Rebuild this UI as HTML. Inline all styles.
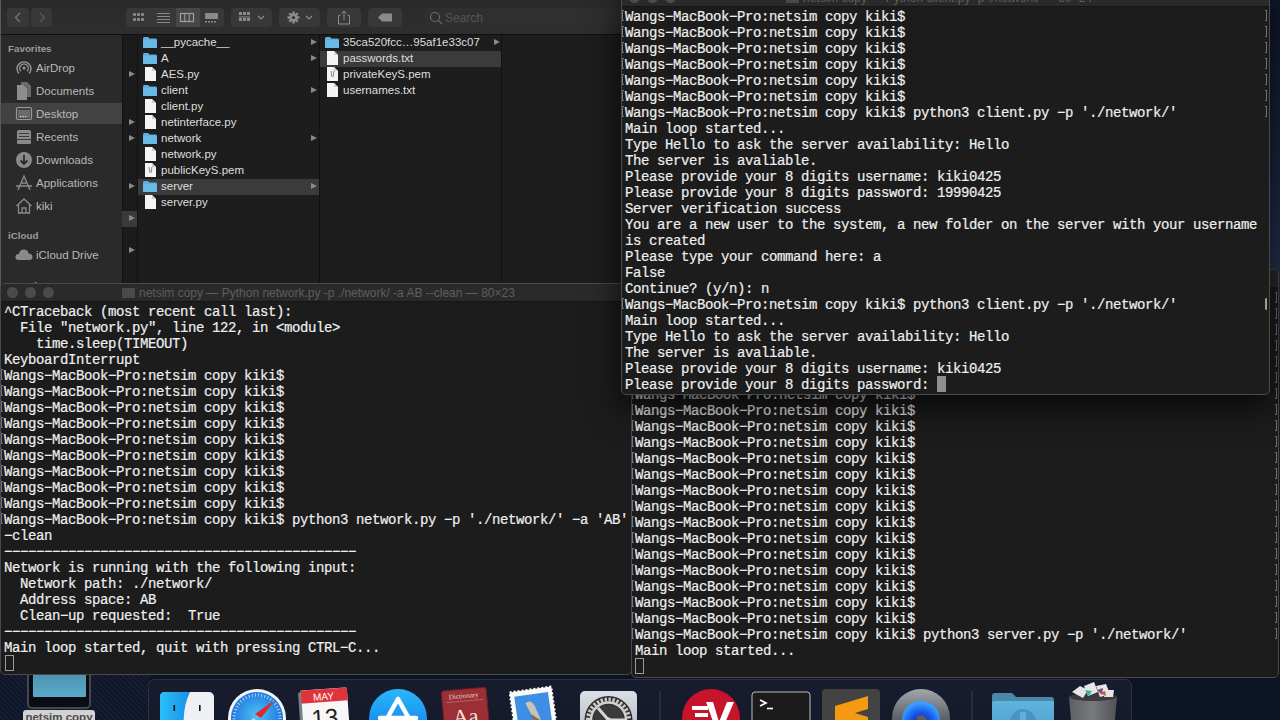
<!DOCTYPE html>
<html><head><meta charset="utf-8"><style>
html,body{margin:0;padding:0;width:1280px;height:720px;overflow:hidden;background:#0e1526;font-family:"Liberation Sans",sans-serif;}
#desk{position:absolute;left:0;top:0;width:1280px;height:720px;background:linear-gradient(180deg,#0f172b 0px,#1c2943 200px,#24324f 270px,#121a2c 400px,#0c1322 600px);}
.win{position:absolute;box-sizing:border-box;}
.layer{position:absolute;left:0;top:0;width:1280px;height:720px;pointer-events:none;}
.t{position:absolute;white-space:pre;font-family:"Liberation Mono",monospace;font-size:14px;letter-spacing:-0.4013px;line-height:16px;color:#efefef;-webkit-text-stroke:0.2px #efefef;}
.mk{position:absolute;width:1px;height:9px;border:1px solid #777;border-right:none;}
.cur{position:absolute;width:7px;height:14px;border:1px solid #9a9a9a;}
.curf{position:absolute;width:9px;height:16px;background:#8e8e8e;}
#tbl{left:0;top:283px;width:632px;height:392px;background:#1c1c1c;border:1px solid #4a4a4a;border-radius:5px;z-index:2;overflow:hidden;}
#tbr{left:631px;top:269px;width:648px;height:409px;background:#1c1c1c;border:1px solid #4a4a4a;border-radius:5px;z-index:4;}
#ttr{left:621px;top:-12px;width:649px;height:407px;background:#1c1c1c;border:1px solid #4a4a4a;border-radius:5px;z-index:6;box-shadow:0 12px 34px rgba(0,0,0,.75);}
.tbar{position:absolute;left:0;top:0;width:100%;height:17px;background:#2a2a2a;border-bottom:1px solid #151515;overflow:hidden;}
.light{position:absolute;top:3px;width:11px;height:11px;border-radius:50%;background:#4b4b4b;}
.ttl{position:absolute;top:1px;font-size:12px;color:#5e5e5e;white-space:nowrap;line-height:16px;}
.fold{display:inline-block;width:13px;height:10px;background:#4a4a4a;border-radius:1px;margin-right:4px;vertical-align:-1px;}
.fb{position:absolute;top:8px;height:19px;background:#383838;border-radius:4px;}
.sh{position:absolute;left:8px;font-size:9.8px;line-height:14px;color:#9a9a9a;font-weight:bold;}
.si{position:absolute;left:36px;font-size:11.5px;line-height:16px;color:#b9b9b9;}
.fi{position:absolute;font-size:11.5px;line-height:16px;color:#dedede;white-space:nowrap;}
.ar{position:absolute;width:0;height:0;border-left:6px solid #8a8a8a;border-top:3.5px solid transparent;border-bottom:3.5px solid transparent;}
.mkr{position:absolute;width:1px;height:9px;border:1px solid #707070;border-left:none;}

</style></head><body>
<div id="desk"></div>
<div style="position:absolute;left:0;top:660px;width:150px;height:60px;background:repeating-linear-gradient(45deg,#0f1629 0px,#0f1629 2px,#161e33 2px,#161e33 3.6px);"></div>
<svg style="position:absolute;left:0;top:660px" width="1280" height="60">
 <defs>
  <linearGradient id="dkbg" x1="0" y1="0" x2="0" y2="1"><stop offset="0" stop-color="#171d2e"/><stop offset="1" stop-color="#141a2a"/></linearGradient>
  <linearGradient id="fdl" x1="0" y1="0" x2="1" y2="0"><stop offset="0" stop-color="#28c0f7"/><stop offset="1" stop-color="#1b8fe9"/></linearGradient>
  <radialGradient id="saf" cx="0.5" cy="0.45" r="0.6"><stop offset="0" stop-color="#4fc3f7"/><stop offset="1" stop-color="#1565d8"/></radialGradient>
  <linearGradient id="aps" x1="0" y1="0" x2="0" y2="1"><stop offset="0" stop-color="#28b8fa"/><stop offset="1" stop-color="#1470e6"/></linearGradient>
  <linearGradient id="spf" x1="0" y1="0" x2="0" y2="1"><stop offset="0" stop-color="#d9e1e6"/><stop offset="1" stop-color="#aeb7bd"/></linearGradient>
  <linearGradient id="dlf" x1="0" y1="0" x2="0" y2="1"><stop offset="0" stop-color="#5fb3dc"/><stop offset="1" stop-color="#4d9ec9"/></linearGradient><linearGradient id="trg" x1="0" y1="0" x2="1" y2="0"><stop offset="0" stop-color="#5e6064"/><stop offset="0.5" stop-color="#77797d"/><stop offset="1" stop-color="#505256"/></linearGradient>
  <linearGradient id="qtg" x1="0" y1="0" x2="0" y2="1"><stop offset="0" stop-color="#a3a7ae"/><stop offset="0.5" stop-color="#5d6168"/><stop offset="1" stop-color="#3a3d42"/></linearGradient><radialGradient id="qtb" cx="0.5" cy="0.6" r="0.55"><stop offset="0" stop-color="#0a1f80"/><stop offset="0.6" stop-color="#1a5cf0"/><stop offset="1" stop-color="#3aa0ff"/></radialGradient>
 </defs>
 <!-- dock background -->
 <rect x="148.5" y="19.5" width="983" height="50" rx="6" fill="url(#dkbg)" stroke="#2b3245" stroke-width="1"/>
 <!-- finder -->
 <rect x="160" y="32" width="54" height="40" rx="5" fill="#eef0f3"/>
 <path d="M165 32 L190 32 Q182 48 184 72 L165 72 Q160 72 160 67 L160 37 Q160 32 165 32 Z" fill="url(#fdl)"/>
 <rect x="173.5" y="45" width="1.6" height="6" fill="#111"/><rect x="199" y="45" width="1.6" height="6" fill="#111"/>
 <!-- safari -->
 <circle cx="257" cy="58" r="29" fill="#f2f4f6"/>
 <circle cx="257" cy="58" r="26" fill="url(#saf)"/>
 <circle cx="257" cy="58" r="23" fill="none" stroke="#cfe6fb" stroke-width="3" stroke-dasharray="1 2.2" opacity="0.8"/>
 <path d="M275 40 L259 56 L255 60 Z" fill="#ff3b30"/><path d="M275 40 L261 58 L255 54 Z" fill="#e0262a"/>
 <path d="M239 76 L255 60 L259 56 Z" fill="#f0f0f0"/><path d="M239 76 L253 58 L259 62 Z" fill="#d8d8d8"/>
 <!-- calendar -->
 <g transform="rotate(-4 325 60)">
  <rect x="302" y="29" width="47" height="50" rx="2" fill="#f7f7f7"/>
  <rect x="302" y="29" width="47" height="13" fill="#e0343c"/>
  <rect x="300" y="31" width="3" height="48" fill="#7a7f86"/>
  <text x="325" y="40" font-family="Liberation Sans" font-size="10" fill="#fff" text-anchor="middle">MAY</text>
  <text x="325" y="66" font-family="Liberation Sans" font-size="24" fill="#222" text-anchor="middle">13</text>
 </g>
 <!-- app store -->
 <circle cx="398" cy="58" r="29" fill="url(#aps)"/>
 <path d="M398 39 L384 64 M398 39 L412 64 M380 58 L416 58" stroke="#fff" stroke-width="4.5" stroke-linecap="round" fill="none"/>
 <!-- dictionary -->
 <g transform="rotate(-5 466 62)">
  <rect x="444" y="29" width="45" height="50" rx="3" fill="#9a2f36"/>
  <rect x="444" y="29" width="45" height="50" rx="3" fill="none" stroke="#6e1d24" stroke-width="1"/>
  <text x="466" y="38" font-family="Liberation Serif" font-size="7" fill="#f1d6c8" text-anchor="middle">Dictionary</text>
  <line x1="448" y1="41" x2="485" y2="41" stroke="#c98080" stroke-width="0.6"/>
  <text x="466" y="64" font-family="Liberation Serif" font-size="22" fill="#f4e4dc" text-anchor="middle">Aa</text>
 </g>
 <!-- mail stamp -->
 <g transform="rotate(-8 536 62)">
  <rect x="514" y="29" width="42" height="48" fill="#fafafa" stroke="#fff" stroke-width="2" stroke-dasharray="2 2"/>
  <rect x="518" y="34" width="34" height="40" fill="#3f8ee6"/>
  <path d="M528 42 Q534 38 537 46 L541 60 Q538 64 534 58 Z" fill="#c9c3b5"/>
  <path d="M532 55 L544 66" stroke="#8a6a4a" stroke-width="3"/>
 </g>
 <!-- system prefs -->
 <rect x="580" y="31" width="57" height="45" rx="5" fill="url(#spf)"/>
 <circle cx="608.5" cy="60" r="24" fill="#2e2e2e"/>
 <circle cx="608.5" cy="60" r="20.5" fill="none" stroke="#c9c9c9" stroke-width="4" stroke-dasharray="2.4 1.6"/>
 <circle cx="608.5" cy="60" r="17.5" fill="none" stroke="#d0d0d0" stroke-width="2.5"/>
 <circle cx="608.5" cy="60" r="15.5" fill="#3a3a3a"/>
 <path d="M598 48 L608.5 60 L626 60 M608.5 60 L600 74" stroke="#d6d6d6" stroke-width="3" fill="none"/>
 <circle cx="608.5" cy="60" r="2.5" fill="#d6d6d6"/>
 <!-- separator -->
 <line x1="660" y1="31" x2="660" y2="60" stroke="#3a4152" stroke-width="1"/>
 <!-- expressvpn -->
 <circle cx="711" cy="58" r="29" fill="#c8142a"/>
 <g fill="#fff"><rect x="692" y="46" width="16" height="4"/><rect x="695" y="53" width="13" height="4"/><rect x="690" y="60" width="18" height="4"/></g>
 <path d="M706 42 L716 70 L722 70 L734 42 L727 42 L719 62 L713 42 Z" fill="#fff"/>
 <!-- terminal -->
 <rect x="752" y="32" width="58" height="42" rx="3" fill="#1b1b1b" stroke="#bdbdbd" stroke-width="1"/>
 <path d="M760 40 L766 43 L760 46" stroke="#fff" stroke-width="1.6" fill="none"/>
 <line x1="767" y1="48.5" x2="773" y2="48.5" stroke="#fff" stroke-width="1.6"/>
 <!-- sublime -->
 <rect x="822" y="29" width="58" height="50" rx="4" fill="#434343"/>
 <path d="M835 46 L868 36 L868 49 L855 53 L868 57 L868 70 L835 60 Z" fill="#f59a10"/>
 <!-- quicktime -->
 <circle cx="921" cy="58" r="29" fill="url(#qtg)"/>
 <circle cx="921" cy="60" r="19" fill="url(#qtb)"/>
 <path d="M916 58 Q921 52 926 58 L934 72 L926 76 Z" fill="#5a5d63"/>
 <!-- separator -->
 <line x1="972" y1="31" x2="972" y2="60" stroke="#3a4152" stroke-width="1"/>
 <!-- downloads folder -->
 <path d="M992 36 Q992 33 995 33 L1012 33 L1016 37 L1051 37 Q1054 37 1054 40 L1054 76 L992 76 Z" fill="#4a88a8"/>
 <rect x="992" y="41" width="62" height="36" rx="2" fill="url(#dlf)"/>
 <circle cx="1023" cy="62" r="13" fill="#4a94bf"/>
 <rect x="1020" y="52" width="6" height="14" fill="#5fb0da"/>
 <!-- trash -->
 <path d="M1069 37 L1117 37 L1113 82 L1073 82 Z" fill="url(#trg)"/>
 <ellipse cx="1093" cy="37" rx="24" ry="4" fill="#3a3c40"/>
 <g fill="#e6e6e6"><path d="M1072 32 L1080 26 L1088 30 L1083 38 Z"/><path d="M1084 26 L1094 22 L1098 32 L1088 36 Z"/><path d="M1096 26 L1106 24 L1110 34 L1100 37 Z"/><path d="M1106 30 L1114 30 L1113 37 L1104 37 Z"/></g>
 <path d="M1085 30 L1092 31 L1089 36 Z" fill="#33b3a0"/><path d="M1097 30 L1103 28 L1102 35 Z" fill="#7a4a80"/><path d="M1100 33 L1105 31 L1106 36 Z" fill="#c06030"/>
 </svg>
<!-- desktop icon -->
<div style="position:absolute;left:27px;top:665px;width:64px;height:44px;border:2px solid #43474f;border-radius:5px;background:#0a0d14;box-sizing:border-box;"></div>
<div style="position:absolute;left:33px;top:665px;width:53px;height:32px;background:linear-gradient(#4a8aa3,#5aaacb);border-radius:1px;"></div>
<div style="position:absolute;left:23px;top:710px;width:72px;height:14px;background:#d2d2d2;border-radius:3px;font-size:11.5px;line-height:15px;color:#4a4a4a;text-align:center;font-weight:bold;">netsim copy</div>

<div class="win" id="finder" style="left:0;top:0;width:622px;height:290px;background:#1d1d1d;z-index:1;overflow:hidden;">
 <!-- toolbar -->
 <div style="position:absolute;left:0;top:0;width:622px;height:34px;background:linear-gradient(#2a2a2a,#2e2e2e);border-bottom:1px solid #101010;"></div>
 <div style="position:absolute;left:0;top:0;width:1px;height:290px;background:#5a5a5a;"></div>
 <!-- nav buttons -->
 <div class="fb" style="left:7px;width:22px;"><svg width="22" height="19"><path d="M13 5 L8.5 9.5 L13 14" stroke="#7a7a7a" stroke-width="1.2" fill="none"/></svg></div>
 <div class="fb" style="left:31px;width:21px;"><svg width="21" height="19"><path d="M9 5 L13.5 9.5 L9 14" stroke="#5a5a5a" stroke-width="1.2" fill="none"/></svg></div>
 <!-- view segmented -->
 <div class="fb" style="left:126px;width:98px;"></div>
 <div style="position:absolute;left:176px;top:8px;width:24px;height:19px;background:#474747;"></div>
 <svg style="position:absolute;left:126px;top:8px" width="98" height="19">
  <g fill="#8a8a8a">
   <rect x="7" y="5" width="3" height="3" rx="1"/><rect x="11" y="5" width="3" height="3" rx="1"/><rect x="15" y="5" width="3" height="3" rx="1"/>
   <rect x="7" y="10" width="3" height="3" rx="1"/><rect x="11" y="10" width="3" height="3" rx="1"/><rect x="15" y="10" width="3" height="3" rx="1"/>
  </g>
  <g stroke="#8a8a8a" stroke-width="1">
   <line x1="31" y1="5.5" x2="44" y2="5.5"/><line x1="31" y1="8.5" x2="44" y2="8.5"/><line x1="31" y1="11.5" x2="44" y2="11.5"/><line x1="31" y1="14.5" x2="44" y2="14.5"/>
  </g>
  <rect x="54.5" y="5.5" width="13" height="8" fill="none" stroke="#a0a0a0" stroke-width="1.2"/>
  <line x1="58.8" y1="5.5" x2="58.8" y2="13.5" stroke="#a0a0a0"/><line x1="63.2" y1="5.5" x2="63.2" y2="13.5" stroke="#a0a0a0"/>
  <rect x="79" y="5" width="13" height="6" fill="#8a8a8a" rx="1"/>
  <g fill="#8a8a8a"><rect x="79" y="13" width="2" height="1.5"/><rect x="82" y="13" width="2" height="1.5"/><rect x="85" y="13" width="2" height="1.5"/><rect x="88" y="13" width="2" height="1.5"/></g>
 </svg>
 <!-- arrange -->
 <div class="fb" style="left:231px;width:41px;"></div>
 <svg style="position:absolute;left:231px;top:8px" width="41" height="19">
  <g fill="#8a8a8a"><rect x="8" y="4" width="3" height="3"/><rect x="12" y="4" width="3" height="3"/><rect x="16" y="4" width="3" height="3"/>
  <rect x="8" y="8.5" width="11" height="1"/>
  <rect x="8" y="10" width="3" height="3"/><rect x="12" y="10" width="3" height="3"/><rect x="16" y="10" width="3" height="3"/></g>
  <path d="M27 8 L30 11 L33 8" stroke="#8a8a8a" stroke-width="1.2" fill="none"/>
 </svg>
 <!-- gear -->
 <div class="fb" style="left:279px;width:41px;"></div>
 <svg style="position:absolute;left:279px;top:8px" width="41" height="19">
  <g transform="translate(14.5,9.5)"><circle r="4.3" fill="#8a8a8a"/>
   <g fill="#8a8a8a"><rect x="-1.2" y="-6" width="2.4" height="12"/><rect x="-1.2" y="-6" width="2.4" height="12" transform="rotate(45)"/><rect x="-1.2" y="-6" width="2.4" height="12" transform="rotate(90)"/><rect x="-1.2" y="-6" width="2.4" height="12" transform="rotate(135)"/></g>
   <circle r="1.6" fill="#333"/></g>
  <path d="M27 8 L30 11 L33 8" stroke="#8a8a8a" stroke-width="1.2" fill="none"/>
 </svg>
 <!-- share -->
 <div class="fb" style="left:327px;width:34px;"></div>
 <svg style="position:absolute;left:327px;top:8px" width="34" height="19">
  <path d="M13.5 7.5 L11.5 7.5 L11.5 16 L22.5 16 L22.5 7.5 L20.5 7.5" stroke="#8a8a8a" stroke-width="1" fill="none"/>
  <path d="M17 12 L17 3 M14.5 5.5 L17 3 L19.5 5.5" stroke="#8a8a8a" stroke-width="1" fill="none"/>
 </svg>
 <!-- tag -->
 <div class="fb" style="left:368px;width:34px;"></div>
 <svg style="position:absolute;left:368px;top:8px" width="34" height="19">
  <path d="M10 9.5 L14 5.5 L24 5.5 L24 13.5 L14 13.5 Z" fill="#8a8a8a"/>
 </svg>
 <!-- search -->
 <div class="fb" style="left:425px;width:220px;background:#2f2f2f;"></div>
 <svg style="position:absolute;left:428px;top:10px" width="16" height="16"><circle cx="7" cy="7" r="4.5" stroke="#6a6a6a" stroke-width="1.2" fill="none"/><line x1="10.3" y1="10.3" x2="14" y2="14" stroke="#6a6a6a" stroke-width="1.2"/></svg>
 <div style="position:absolute;left:445px;top:10px;font-size:12px;line-height:16px;color:#555;">Search</div>

 <!-- sidebar -->
 <div style="position:absolute;left:1px;top:35px;width:121px;height:255px;background:#2a2a2a;"></div>
 <div style="position:absolute;left:1px;top:103px;width:121px;height:21px;background:#424242;"></div>
 <div class="sh" style="top:42px">Favorites</div>
 <div class="si" style="top:60px">AirDrop</div>
 <div class="si" style="top:83px">Documents</div>
 <div class="si" style="top:106px">Desktop</div>
 <div class="si" style="top:129px">Recents</div>
 <div class="si" style="top:152px">Downloads</div>
 <div class="si" style="top:175px">Applications</div>
 <div class="si" style="top:198px">kiki</div>
 <div class="sh" style="top:229px">iCloud</div>
 <div class="si" style="top:247px">iCloud Drive</div>
 <div class="sh" style="top:279px">Locations</div>
 <svg style="position:absolute;left:14px;top:58px" width="20" height="210">
  <g stroke="#9a9a9a" fill="none" stroke-width="1.3">
   <!-- airdrop -->
   <path d="M4.8 15.5 A7 7 0 1 1 15.2 15.5"/><path d="M6.8 13.3 A4.3 4.3 0 1 1 13.2 13.3"/><circle cx="10" cy="10" r="1.5" fill="#9a9a9a" stroke="none"/>
  </g>
  <!-- documents -->
  <path d="M3 27 L10 27 L13 30 L13 42 L3 42 Z" fill="#8d8d8d"/><path d="M7 24 L13 24 L17 28 L17 39 L13 39 L13 30 L10 27 L7 27 Z" fill="#6a6a6a"/>
  <!-- desktop -->
  <rect x="2.5" y="49.5" width="15" height="12" rx="1.5" stroke="#9a9a9a" stroke-width="1.2" fill="none"/><rect x="4" y="52" width="12" height="8" fill="#6a6a6a"/>
  <g fill="#ddd"><rect x="6" y="58" width="1.2" height="1.2"/><rect x="8.5" y="58" width="1.2" height="1.2"/><rect x="11" y="58" width="1.2" height="1.2"/></g>
  <!-- recents -->
  <rect x="3" y="72" width="14" height="14" rx="1.5" fill="#8a8a8a"/><g stroke="#3a3a3a" stroke-width="1"><line x1="5" y1="75.5" x2="15" y2="75.5"/><line x1="5" y1="78.5" x2="15" y2="78.5"/><line x1="3" y1="81.5" x2="17" y2="81.5"/></g>
  <!-- downloads -->
  <circle cx="10" cy="102" r="8" fill="#8a8a8a"/><path d="M10 97 L10 106 M6.5 102.5 L10 106 L13.5 102.5" stroke="#2a2a2a" stroke-width="1.8" fill="none"/>
  <!-- applications -->
  <path d="M4 132 L10 118 L16 132 M2 128 L18 128 M7 125 L13 125" stroke="#8a8a8a" stroke-width="1.4" fill="none"/>
  <!-- home -->
  <path d="M2.5 148 L10 141 L17.5 148 M4.5 146.5 L4.5 155 L15.5 155 L15.5 146.5 M8 155 L8 150 L12 150 L12 155" stroke="#8a8a8a" stroke-width="1.3" fill="none"/>
  <!-- cloud -->
  <path d="M4.5 202 Q1 202 1.5 198.5 Q2 195.5 5 196 Q5.5 191.5 10 191.5 Q14 191.5 14.5 195.5 Q18.5 195.5 18.5 199 Q18.5 202 15.5 202 Z" fill="#8a8a8a"/>
 </svg>

 <!-- narrow column -->
 <div style="position:absolute;left:122px;top:35px;width:16px;height:255px;background:#1b1b1b;border-left:1px solid #121212;border-right:1px solid #121212;box-sizing:border-box;"></div>
 <div style="position:absolute;left:122px;top:211px;width:15px;height:16px;background:#3a3a3a;"></div>
 <div class="ar" style="left:129px;top:71px"></div>
 <div class="ar" style="left:129px;top:119px"></div>
 <div class="ar" style="left:129px;top:135px"></div>
 <div class="ar" style="left:129px;top:183px"></div>
 <div class="ar" style="left:129px;top:215px"></div>
 <div class="ar" style="left:129px;top:247px"></div>

 <!-- column 2 -->
 <div style="position:absolute;left:319px;top:35px;width:1px;height:255px;background:#111;"></div>
 <div style="position:absolute;left:138px;top:179px;width:181px;height:16px;background:#3b3b3b;"></div>
 <div class="fi" style="left:161px;top:34px">__pycache__</div>
 <div class="fi" style="left:161px;top:50px">A</div>
 <div class="fi" style="left:161px;top:66px">AES.py</div>
 <div class="fi" style="left:161px;top:82px">client</div>
 <div class="fi" style="left:161px;top:98px">client.py</div>
 <div class="fi" style="left:161px;top:114px">netinterface.py</div>
 <div class="fi" style="left:161px;top:130px">network</div>
 <div class="fi" style="left:161px;top:146px">network.py</div>
 <div class="fi" style="left:161px;top:162px">publicKeyS.pem</div>
 <div class="fi" style="left:161px;top:178px">server</div>
 <div class="fi" style="left:161px;top:194px">server.py</div>
 <div class="ar" style="left:311px;top:39px"></div>
 <div class="ar" style="left:311px;top:55px"></div>
 <div class="ar" style="left:311px;top:87px"></div>
 <div class="ar" style="left:311px;top:135px"></div>
 <div class="ar" style="left:311px;top:183px"></div>

 <!-- column 3 -->
 <div style="position:absolute;left:501px;top:35px;width:1px;height:255px;background:#111;"></div>
 <div style="position:absolute;left:320px;top:51px;width:181px;height:16px;background:#3b3b3b;"></div>
 <div class="fi" style="left:343px;top:34px">35ca520fcc…95af1e33c07</div>
 <div class="fi" style="left:343px;top:50px">passwords.txt</div>
 <div class="fi" style="left:343px;top:66px">privateKeyS.pem</div>
 <div class="fi" style="left:343px;top:82px">usernames.txt</div>
 <div class="ar" style="left:494px;top:39px"></div>

 <svg style="position:absolute;left:0;top:0" width="622" height="290">
  
  <g transform="translate(143,37)"><path d="M0 1.5 Q0 0 1.5 0 L5 0 L6.5 1.5 L12.5 1.5 Q14 1.5 14 3 L14 10 Q14 11 13 11 L1 11 Q0 11 0 10 Z" fill="#5fb0de"/><rect x="0" y="3" width="14" height="8" rx="1" fill="#67b9e6"/></g>
  <g transform="translate(143,53)"><path d="M0 1.5 Q0 0 1.5 0 L5 0 L6.5 1.5 L12.5 1.5 Q14 1.5 14 3 L14 10 Q14 11 13 11 L1 11 Q0 11 0 10 Z" fill="#5fb0de"/><rect x="0" y="3" width="14" height="8" rx="1" fill="#67b9e6"/></g>
  <g transform="translate(145,67)"><path d="M0 0 L7 0 L11 4 L11 14 L0 14 Z" fill="#f4f4f4"/><path d="M7 0 L7 4 L11 4" fill="#cfcfcf"/></g>
  <g transform="translate(143,85)"><path d="M0 1.5 Q0 0 1.5 0 L5 0 L6.5 1.5 L12.5 1.5 Q14 1.5 14 3 L14 10 Q14 11 13 11 L1 11 Q0 11 0 10 Z" fill="#5fb0de"/><rect x="0" y="3" width="14" height="8" rx="1" fill="#67b9e6"/></g>
  <g transform="translate(145,99)"><path d="M0 0 L7 0 L11 4 L11 14 L0 14 Z" fill="#f4f4f4"/><path d="M7 0 L7 4 L11 4" fill="#cfcfcf"/></g>
  <g transform="translate(145,115)"><path d="M0 0 L7 0 L11 4 L11 14 L0 14 Z" fill="#f4f4f4"/><path d="M7 0 L7 4 L11 4" fill="#cfcfcf"/></g>
  <g transform="translate(143,133)"><path d="M0 1.5 Q0 0 1.5 0 L5 0 L6.5 1.5 L12.5 1.5 Q14 1.5 14 3 L14 10 Q14 11 13 11 L1 11 Q0 11 0 10 Z" fill="#5fb0de"/><rect x="0" y="3" width="14" height="8" rx="1" fill="#67b9e6"/></g>
  <g transform="translate(145,147)"><path d="M0 0 L7 0 L11 4 L11 14 L0 14 Z" fill="#f4f4f4"/><path d="M7 0 L7 4 L11 4" fill="#cfcfcf"/></g>
  <g transform="translate(145,163)"><path d="M0 0 L7 0 L11 4 L11 14 L0 14 Z" fill="#f4f4f4"/><path d="M7 0 L7 4 L11 4" fill="#cfcfcf"/></g>
  <path d="M149 167 L150 173 M152 167 L151 173" stroke="#888" stroke-width="1"/>
  <g transform="translate(143,181)"><path d="M0 1.5 Q0 0 1.5 0 L5 0 L6.5 1.5 L12.5 1.5 Q14 1.5 14 3 L14 10 Q14 11 13 11 L1 11 Q0 11 0 10 Z" fill="#5fb0de"/><rect x="0" y="3" width="14" height="8" rx="1" fill="#67b9e6"/></g>
  <g transform="translate(145,195)"><path d="M0 0 L7 0 L11 4 L11 14 L0 14 Z" fill="#f4f4f4"/><path d="M7 0 L7 4 L11 4" fill="#cfcfcf"/></g>
  <g transform="translate(325,37)"><path d="M0 1.5 Q0 0 1.5 0 L5 0 L6.5 1.5 L12.5 1.5 Q14 1.5 14 3 L14 10 Q14 11 13 11 L1 11 Q0 11 0 10 Z" fill="#5fb0de"/><rect x="0" y="3" width="14" height="8" rx="1" fill="#67b9e6"/></g>
  <g transform="translate(327,51)"><path d="M0 0 L7 0 L11 4 L11 14 L0 14 Z" fill="#f4f4f4"/><path d="M7 0 L7 4 L11 4" fill="#cfcfcf"/></g>
  <g transform="translate(327,67)"><path d="M0 0 L7 0 L11 4 L11 14 L0 14 Z" fill="#f4f4f4"/><path d="M7 0 L7 4 L11 4" fill="#cfcfcf"/></g>
  <path d="M331 71 L332 77 M334 71 L333 77" stroke="#888" stroke-width="1"/>
  <g transform="translate(327,83)"><path d="M0 0 L7 0 L11 4 L11 14 L0 14 Z" fill="#f4f4f4"/><path d="M7 0 L7 4 L11 4" fill="#cfcfcf"/></g>
 </svg>
</div>

<div class="win" id="tbl">
 <div class="tbar"><span class="light" style="left:6px"></span><span class="light" style="left:24px"></span><span class="light" style="left:42px"></span>
 <span class="ttl" style="left:121px"><span class="fold"></span>netsim copy — Python network.py -p ./network/ -a AB --clean — 80×23</span></div>
</div>
<div class="layer" style="z-index:3">
<div class="t" style="top:304px;left:4px">^CTraceback (most recent call last):</div>
<div class="t" style="top:320px;left:4px">  File &quot;network.py&quot;, line 122, in &lt;module&gt;</div>
<div class="t" style="top:336px;left:4px">    time.sleep(TIMEOUT)</div>
<div class="t" style="top:352px;left:4px">KeyboardInterrupt</div>
<div class="t" style="top:368px;left:4px">Wangs−MacBook−Pro:netsim copy kiki$</div>
<div class="mk" style="top:369px;left:1px"></div>
<div class="t" style="top:384px;left:4px">Wangs−MacBook−Pro:netsim copy kiki$</div>
<div class="mk" style="top:385px;left:1px"></div>
<div class="t" style="top:400px;left:4px">Wangs−MacBook−Pro:netsim copy kiki$</div>
<div class="mk" style="top:401px;left:1px"></div>
<div class="t" style="top:416px;left:4px">Wangs−MacBook−Pro:netsim copy kiki$</div>
<div class="mk" style="top:417px;left:1px"></div>
<div class="t" style="top:432px;left:4px">Wangs−MacBook−Pro:netsim copy kiki$</div>
<div class="mk" style="top:433px;left:1px"></div>
<div class="t" style="top:448px;left:4px">Wangs−MacBook−Pro:netsim copy kiki$</div>
<div class="mk" style="top:449px;left:1px"></div>
<div class="t" style="top:464px;left:4px">Wangs−MacBook−Pro:netsim copy kiki$</div>
<div class="mk" style="top:465px;left:1px"></div>
<div class="t" style="top:480px;left:4px">Wangs−MacBook−Pro:netsim copy kiki$</div>
<div class="mk" style="top:481px;left:1px"></div>
<div class="t" style="top:496px;left:4px">Wangs−MacBook−Pro:netsim copy kiki$</div>
<div class="mk" style="top:497px;left:1px"></div>
<div class="t" style="top:512px;left:4px">Wangs−MacBook−Pro:netsim copy kiki$ python3 network.py −p &#x27;./network/&#x27; −a &#x27;AB&#x27; −</div>
<div class="mk" style="top:513px;left:1px"></div>
<div class="t" style="top:528px;left:4px">−clean</div>
<div class="t" style="top:544px;left:4px">−−−−−−−−−−−−−−−−−−−−−−−−−−−−−−−−−−−−−−−−−−−−</div>
<div class="t" style="top:560px;left:4px">Network is running with the following input:</div>
<div class="t" style="top:576px;left:4px">  Network path: ./network/</div>
<div class="t" style="top:592px;left:4px">  Address space: AB</div>
<div class="t" style="top:608px;left:4px">  Clean−up requested:  True</div>
<div class="t" style="top:624px;left:4px">−−−−−−−−−−−−−−−−−−−−−−−−−−−−−−−−−−−−−−−−−−−−</div>
<div class="t" style="top:640px;left:4px">Main loop started, quit with pressing CTRL−C...</div>
<div class="t" style="top:656px;left:4px"></div>
<div class="cur" style="left:5px;top:655px"></div>
</div>
<div class="win" id="tbr"><div class="tbar"></div></div>
<div class="layer" style="z-index:5">
<div class="t" style="top:387px;left:635px">Wangs−MacBook−Pro:netsim copy kiki$</div>
<div class="mk" style="top:388px;left:632px"></div>
<div class="t" style="top:403px;left:635px">Wangs−MacBook−Pro:netsim copy kiki$</div>
<div class="mk" style="top:404px;left:632px"></div>
<div class="t" style="top:419px;left:635px">Wangs−MacBook−Pro:netsim copy kiki$</div>
<div class="mk" style="top:420px;left:632px"></div>
<div class="t" style="top:435px;left:635px">Wangs−MacBook−Pro:netsim copy kiki$</div>
<div class="mk" style="top:436px;left:632px"></div>
<div class="t" style="top:451px;left:635px">Wangs−MacBook−Pro:netsim copy kiki$</div>
<div class="mk" style="top:452px;left:632px"></div>
<div class="t" style="top:467px;left:635px">Wangs−MacBook−Pro:netsim copy kiki$</div>
<div class="mk" style="top:468px;left:632px"></div>
<div class="t" style="top:483px;left:635px">Wangs−MacBook−Pro:netsim copy kiki$</div>
<div class="mk" style="top:484px;left:632px"></div>
<div class="t" style="top:499px;left:635px">Wangs−MacBook−Pro:netsim copy kiki$</div>
<div class="mk" style="top:500px;left:632px"></div>
<div class="t" style="top:515px;left:635px">Wangs−MacBook−Pro:netsim copy kiki$</div>
<div class="mk" style="top:516px;left:632px"></div>
<div class="t" style="top:531px;left:635px">Wangs−MacBook−Pro:netsim copy kiki$</div>
<div class="mk" style="top:532px;left:632px"></div>
<div class="t" style="top:547px;left:635px">Wangs−MacBook−Pro:netsim copy kiki$</div>
<div class="mk" style="top:548px;left:632px"></div>
<div class="t" style="top:563px;left:635px">Wangs−MacBook−Pro:netsim copy kiki$</div>
<div class="mk" style="top:564px;left:632px"></div>
<div class="t" style="top:579px;left:635px">Wangs−MacBook−Pro:netsim copy kiki$</div>
<div class="mk" style="top:580px;left:632px"></div>
<div class="t" style="top:595px;left:635px">Wangs−MacBook−Pro:netsim copy kiki$</div>
<div class="mk" style="top:596px;left:632px"></div>
<div class="t" style="top:611px;left:635px">Wangs−MacBook−Pro:netsim copy kiki$</div>
<div class="mk" style="top:612px;left:632px"></div>
<div class="t" style="top:627px;left:635px">Wangs−MacBook−Pro:netsim copy kiki$ python3 server.py −p &#x27;./network/&#x27;</div>
<div class="mk" style="top:628px;left:632px"></div>
<div class="t" style="top:643px;left:635px">Main loop started...</div>
<div class="t" style="top:659px;left:635px"></div>
<div class="cur" style="left:635px;top:658px"></div>
<div class="mkr" style="left:1275px;top:292px"></div><div class="mkr" style="left:1275px;top:308px"></div><div class="mkr" style="left:1275px;top:324px"></div><div class="mkr" style="left:1275px;top:340px"></div><div class="mkr" style="left:1275px;top:356px"></div><div class="mkr" style="left:1275px;top:372px"></div><div class="mkr" style="left:1275px;top:388px"></div><div class="mkr" style="left:1275px;top:404px"></div><div class="mkr" style="left:1275px;top:420px"></div><div class="mkr" style="left:1275px;top:436px"></div><div class="mkr" style="left:1275px;top:452px"></div><div class="mkr" style="left:1275px;top:468px"></div><div class="mkr" style="left:1275px;top:484px"></div><div class="mkr" style="left:1275px;top:500px"></div><div class="mkr" style="left:1275px;top:516px"></div><div class="mkr" style="left:1275px;top:532px"></div><div class="mkr" style="left:1275px;top:548px"></div><div class="mkr" style="left:1275px;top:564px"></div><div class="mkr" style="left:1275px;top:580px"></div><div class="mkr" style="left:1275px;top:596px"></div><div class="mkr" style="left:1275px;top:612px"></div><div class="mkr" style="left:1275px;top:628px"></div>
</div>
<div class="win" id="ttr">
 <div class="tbar" style="top:0;height:17px"><span class="light" style="left:7px"></span><span class="light" style="left:25px"></span><span class="light" style="left:43px"></span><span class="ttl" style="left:164px;top:1px"><span class="fold"></span>netsim copy — Python client.py -p ./network/ — 80×24</span></div>
</div>
<div class="layer" style="z-index:7">
<div class="t" style="top:9px;left:625px">Wangs−MacBook−Pro:netsim copy kiki$</div>
<div class="mk" style="top:10px;left:622px"></div>
<div class="t" style="top:25px;left:625px">Wangs−MacBook−Pro:netsim copy kiki$</div>
<div class="mk" style="top:26px;left:622px"></div>
<div class="t" style="top:41px;left:625px">Wangs−MacBook−Pro:netsim copy kiki$</div>
<div class="mk" style="top:42px;left:622px"></div>
<div class="t" style="top:57px;left:625px">Wangs−MacBook−Pro:netsim copy kiki$</div>
<div class="mk" style="top:58px;left:622px"></div>
<div class="t" style="top:73px;left:625px">Wangs−MacBook−Pro:netsim copy kiki$</div>
<div class="mk" style="top:74px;left:622px"></div>
<div class="t" style="top:89px;left:625px">Wangs−MacBook−Pro:netsim copy kiki$</div>
<div class="mk" style="top:90px;left:622px"></div>
<div class="t" style="top:105px;left:625px">Wangs−MacBook−Pro:netsim copy kiki$ python3 client.py −p &#x27;./network/&#x27;</div>
<div class="mk" style="top:106px;left:622px"></div>
<div class="t" style="top:121px;left:625px">Main loop started...</div>
<div class="t" style="top:137px;left:625px">Type Hello to ask the server availability: Hello</div>
<div class="t" style="top:153px;left:625px">The server is avaliable.</div>
<div class="t" style="top:169px;left:625px">Please provide your 8 digits username: kiki0425</div>
<div class="t" style="top:185px;left:625px">Please provide your 8 digits password: 19990425</div>
<div class="t" style="top:201px;left:625px">Server verification success</div>
<div class="t" style="top:217px;left:625px">You are a new user to the system, a new folder on the server with your username</div>
<div class="t" style="top:233px;left:625px">is created</div>
<div class="t" style="top:249px;left:625px">Please type your command here: a</div>
<div class="t" style="top:265px;left:625px">False</div>
<div class="t" style="top:281px;left:625px">Continue? (y/n): n</div>
<div class="t" style="top:297px;left:625px">Wangs−MacBook−Pro:netsim copy kiki$ python3 client.py −p &#x27;./network/&#x27;</div>
<div class="mk" style="top:298px;left:622px"></div>
<div class="t" style="top:313px;left:625px">Main loop started...</div>
<div class="t" style="top:329px;left:625px">Type Hello to ask the server availability: Hello</div>
<div class="t" style="top:345px;left:625px">The server is avaliable.</div>
<div class="t" style="top:361px;left:625px">Please provide your 8 digits username: kiki0425</div>
<div class="t" style="top:377px;left:625px">Please provide your 8 digits password: </div>
<div class="curf" style="left:937px;top:376px"></div>
<div class="mkr" style="left:1265px;top:10px"></div><div class="mkr" style="left:1265px;top:26px"></div><div class="mkr" style="left:1265px;top:42px"></div><div class="mkr" style="left:1265px;top:58px"></div><div class="mkr" style="left:1265px;top:74px"></div><div class="mkr" style="left:1265px;top:90px"></div><div class="mkr" style="left:1265px;top:106px"></div>
<div style="position:absolute;left:1265px;top:298px;width:2px;height:12px;background:#9a9a9a;border-radius:1px"></div>
</div>
</body></html>
